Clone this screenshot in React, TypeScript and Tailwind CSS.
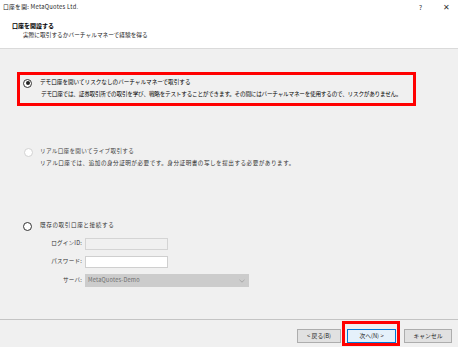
import React from "react";

const F = { fontFamily: '"Noto Sans CJK JP", "Noto Sans", sans-serif' };

function Radio({ kind }: { kind: "on" | "off" | "disabled" }) {
  const border = kind === "disabled" ? "border-[#d2d2d2]" : "border-[#333333]";
  return (
    <span
      className={`flex h-[9px] w-[9px] shrink-0 items-center justify-center rounded-full border bg-white ${border}`}
    >
      {kind === "on" && <span className="h-[4px] w-[4px] rounded-full bg-[#222222]" />}
    </span>
  );
}

function Btn({ children, def }: { children: React.ReactNode; def?: boolean }) {
  return (
    <div
      className={`flex h-[14px] items-center justify-center whitespace-nowrap border text-[5.8px] leading-none text-[#222] ${
        def ? "border-[#0078d7] bg-[#e5f1fb]" : "border-[#adadad] bg-[#e1e1e1]"
      }`}
    >
      {children}
    </div>
  );
}

export default function App() {
  return (
    <div
      style={F}
      className="flex h-[347px] w-[458px] flex-col overflow-hidden whitespace-nowrap bg-[#f0f0f0] text-[5.6px] leading-none text-[#1e1e1e]"
    >
      {/* Header */}
      <div className="h-[49px] shrink-0 border-b border-[#dadada] bg-white">
        <div className="flex h-[14px] items-center pl-[3px] pr-[8px]">
          <span className="text-[5.8px] tracking-[0.25px]">口座を開: MetaQuotes Ltd.</span>
          <span className="ml-auto text-[6.5px] text-[#333]">?</span>
          <span className="ml-[21px] text-[8px] font-light text-[#333]">✕</span>
        </div>
        <div className="mt-[7px] flex h-[9px] items-center pl-[12px] text-[6px] font-bold text-black">
          口座を開設する
        </div>
        <div className="flex h-[9px] items-center pl-[23px] text-[5.7px] text-[#222]">
          実際に取引するかバーチャルマネーで経験を得る
        </div>
      </div>

      {/* Body */}
      <div className="flex-1">
        {/* Option 1 */}
        <div className="ml-[17px] mt-[23px] h-[34px] w-[399px] border-[3px] border-[#ff0000] pt-[3px]">
          <div className="flex h-[10px] items-center pl-[3px]">
            <Radio kind="on" />
            <span className="ml-[8px] text-black">デモ口座を開いてリスクなしのバーチャルマネーで取引する</span>
          </div>
          <div className="mt-[2px] flex h-[10px] items-center pl-[21px] tracking-[-0.2px] text-black">
            デモ口座では、証券取引所での取引を学び、戦略をテストすることができます。その間にはバーチャルマネーを使用するので、リスクがありません。
          </div>
        </div>

        {/* Option 2 */}
        <div className="mt-[41px]">
          <div className="flex h-[10px] items-center pl-[24px]">
            <Radio kind="disabled" />
            <span className="ml-[7px] tracking-[0.3px] text-[#444]">リアル口座を開いてライブ取引する</span>
          </div>
          <div className="mt-[2px] flex h-[10px] items-center pl-[40px] tracking-[0.5px] text-[#333]">
            リアル口座では、追加の身分証明が必要です。身分証明書の写しを提出する必要があります。
          </div>
        </div>

        {/* Option 3 */}
        <div className="mt-[52px]">
          <div className="flex h-[10px] items-center pl-[23px]">
            <Radio kind="off" />
            <span className="ml-[8px] tracking-[0.6px] text-[#333]">既存の取引口座と接続する</span>
          </div>
          <div className="mt-[7px] flex flex-col gap-[6px]">
            <div className="flex h-[12px] items-center">
              <span className="w-[83px] pr-[1px] text-right tracking-[0.2px] text-[#333]">ログインID:</span>
              <div className="ml-[2px] h-[12px] w-[83px] border border-[#d4d4d4] bg-[#f0f0f0]" />
            </div>
            <div className="flex h-[12px] items-center">
              <span className="w-[83px] pr-[1px] text-right tracking-[0.2px] text-[#333]">パスワード:</span>
              <div className="ml-[2px] h-[12px] w-[83px] border border-[#cfcfcf] bg-white" />
            </div>
            <div className="flex h-[13px] items-center">
              <span className="w-[83px] pr-[1px] text-right tracking-[0.2px] text-[#333]">サーバ:</span>
              <div className="ml-[2px] flex h-[13px] w-[164px] items-center bg-[#cccccc] pl-[3px] pr-[4px]">
                <span className="tracking-[0.2px] text-[#6d6d6d]">MetaQuotes-Demo</span>
                <svg className="ml-auto" width="6" height="4" viewBox="0 0 6 4">
                  <path d="M0.5 0.8 L3 3.2 L5.5 0.8" fill="none" stroke="#9a9a9a" strokeWidth="0.7" />
                </svg>
              </div>
            </div>
          </div>
        </div>
      </div>

      {/* Footer */}
      <div className="h-[28px] shrink-0 border-t border-[#c4c4c4]">
        <div className="flex items-start justify-end pr-[6px]">
          <div className="mt-[9px] w-[44px]">
            <Btn>&lt; 戻る(B)</Btn>
          </div>
          <div className="ml-[1px] mt-[1px] border-[3px] border-[#ff0000] pb-[0px] pl-[2px] pr-[1px] pt-[5px]">
            <div className="w-[49px]">
              <Btn def>次へ(N) &gt;</Btn>
            </div>
          </div>
          <div className="ml-[4px] mt-[9px] w-[48px]">
            <Btn>キャンセル</Btn>
          </div>
        </div>
      </div>
    </div>
  );
}
